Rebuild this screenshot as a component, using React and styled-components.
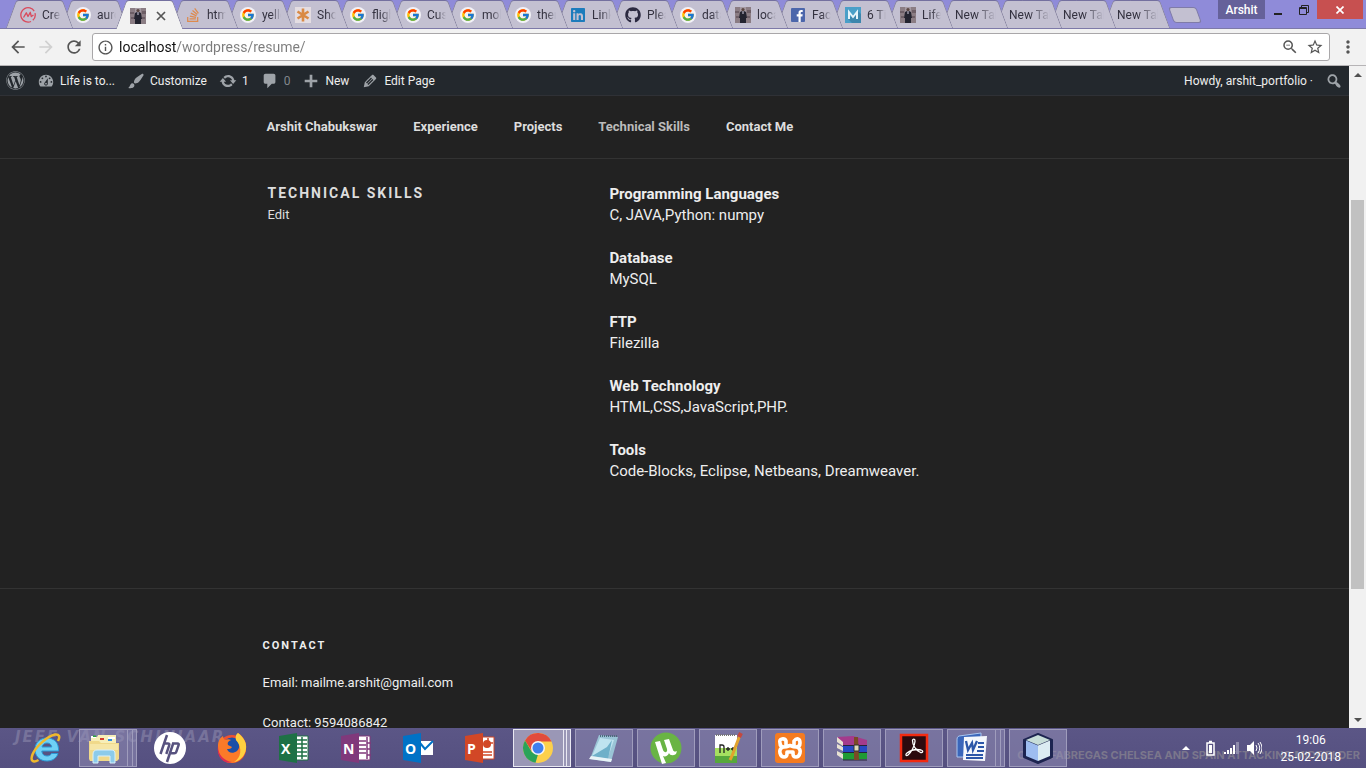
import React from "react";
import styled, { createGlobalStyle, css } from "styled-components";
import { FcGoogle } from "react-icons/fc";
import { FaWordpress, FaGithub, FaLinkedin, FaStackOverflow } from "react-icons/fa";
import {
  MdArrowBack,
  MdArrowForward,
  MdRefresh,
  MdInfoOutline,
  MdStarBorder,
  MdMoreVert,
  MdZoomOut,
} from "react-icons/md";

const ui = `Roboto, "Noto Sans", sans-serif`;
const body = `Roboto, "Liberation Sans", sans-serif`;

const Global = createGlobalStyle`
  * { box-sizing: border-box; }
  body { margin: 0; background: #222; font-family: ${ui}; }
  button { font: inherit; border: 0; padding: 0; background: none; color: inherit; }
  a { color: inherit; text-decoration: none; }
  p, h2, h3 { margin: 0; }
`;

const Screen = styled.div`
  display: flex;
  flex-direction: column;
  height: 100vh;
  overflow: hidden;
`;

/* ---------- Browser tabs ---------- */

const TabStrip = styled.div`
  display: flex;
  flex: none;
  height: 29px;
  padding-left: 6px;
  background: #8f8bd9;
  border-bottom: 1px solid #7d79a8;
`;

const tabFill = (p) => (p.$active ? "#f2f2f2" : "#c3c0d1");

const Tab = styled.button`
  position: relative;
  z-index: ${(p) => (p.$active ? 30 : p.$level)};
  flex: none;
  display: flex;
  align-items: center;
  gap: 6px;
  width: 67px;
  height: ${(p) => (p.$active ? 29 : 28)}px;
  margin-right: ${(p) => (p.$plain ? -13 : -12)}px;
  padding: 2px 12px 0 14px;
  font-size: 12px;
  color: #33313f;
  background: linear-gradient(${tabFill}, ${tabFill}) center / 24px 100% no-repeat;
  &::before,
  &::after {
    content: "";
    position: absolute;
    z-index: -1;
    top: 0;
    bottom: 0;
    width: 29px;
    background: ${tabFill};
    border-top: 1px solid #74709f;
  }
  &::before {
    left: 5px;
    transform: skewX(-20deg);
    border-left: 1px solid #85829e;
    border-top-left-radius: 3px;
  }
  &::after {
    right: 5px;
    transform: skewX(20deg);
    border-right: 1px solid #85829e;
    border-top-right-radius: 3px;
  }
`;

const TabTitle = styled.span`
  flex: 1;
  overflow: hidden;
  white-space: nowrap;
  text-align: left;
  -webkit-mask-image: linear-gradient(90deg, #000 50%, transparent);
  mask-image: linear-gradient(90deg, #000 50%, transparent);
`;

const Favicon = styled.svg`
  flex: none;
  width: 16px;
  height: 16px;
`;

const Disc = styled.span`
  flex: none;
  display: flex;
  align-items: center;
  justify-content: center;
  width: 16px;
  height: 16px;
  border-radius: 8px;
  background: #f3f2f8;
  font-size: 14px;
`;

const IconBox = styled.span`
  flex: none;
  display: flex;
  width: 16px;
  height: 16px;
  font-size: 16px;
  color: ${(p) => p.$color};
`;

const CloseTab = styled.svg`
  width: 10px;
  height: 10px;
  margin-left: 4px;
`;

const NewTab = styled.button`
  flex: none;
  width: 28px;
  height: 16px;
  margin: 7px 0 0 14px;
  background: #c3c0d1;
  border: 1px solid #7f7ba8;
  border-radius: 3px;
  transform: skewX(20deg);
`;

const WindowButtons = styled.div`
  display: flex;
  align-items: flex-start;
  margin-left: auto;
`;

const Profile = styled.button`
  width: 47px;
  height: 19px;
  background: #65619a;
  color: #fff;
  font-size: 12px;
  font-weight: 500;
`;

const WinButton = styled.button`
  display: flex;
  align-items: center;
  justify-content: center;
  width: ${(p) => (p.$close ? 46 : 26)}px;
  height: 19px;
  margin-right: ${(p) => (p.$close ? 3 : 0)}px;
  background: ${(p) => (p.$close ? "#c75050" : "transparent")};
`;

/* ---------- Browser toolbar ---------- */

const Toolbar = styled.div`
  display: flex;
  align-items: center;
  flex: none;
  height: 37px;
  padding: 0 8px;
  background: #f2f2f2;
  border-bottom: 1px solid #b6b4b6;
`;

const ToolButton = styled.button`
  display: flex;
  align-items: center;
  justify-content: center;
  flex: none;
  width: ${(p) => (p.$narrow ? 20 : 28)}px;
  height: 28px;
  font-size: 20px;
  color: ${(p) => (p.$off ? "#d0d0d0" : "#555")};
`;

const NavButtons = styled.div`
  display: flex;
  margin: 0 4px 0 -4px;
`;

const Omnibox = styled.label`
  display: flex;
  align-items: center;
  flex: 1;
  height: 28px;
  margin-right: 8px;
  padding: 0 4px;
  gap: 5px;
  background: #fff;
  border: 1px solid #a9a7a9;
  border-radius: 3px;
  font-size: 17px;
  color: #555;
`;

const Address = styled.input`
  flex: 1;
  min-width: 0;
  height: 24px;
  padding: 0;
  border: 0;
  outline: 0;
  font: 14px ${ui};
  color: transparent;
  background: linear-gradient(90deg, #111 57px, #7c7c7c 57px);
  -webkit-background-clip: text;
  background-clip: text;
`;

const OmniButton = styled.button`
  display: flex;
  width: 20px;
  justify-content: center;
  font-size: 18px;
`;

/* ---------- Viewport ---------- */

const Viewport = styled.div`
  display: flex;
  flex: 1;
  min-height: 0;
`;

const Site = styled.div`
  flex: 1;
  min-width: 0;
  overflow: hidden;
  background: #222;
  color: #eee;
  font-family: ${body};
`;

const Scrollbar = styled.div`
  display: flex;
  flex-direction: column;
  flex: none;
  width: 17px;
  background: #f1f1f1;
`;

const ScrollArrow = styled.button`
  display: flex;
  align-items: center;
  justify-content: center;
  flex: none;
  height: 17px;
`;

const ScrollSpace = styled.div`
  flex: ${(p) => p.$share};
`;

const ScrollThumb = styled.div`
  flex: 389;
  margin: 0 2px;
  background: #c1c1c1;
`;

/* ---------- WordPress admin bar ---------- */

const AdminBar = styled.nav`
  display: flex;
  align-items: center;
  gap: 12px;
  height: 30px;
  padding: 0 6px;
  background: #23282d;
  border-bottom: 1px solid #2f3136;
  font: 12px ${ui};
  color: #eee;
`;

const AdminLink = styled.a`
  display: flex;
  align-items: center;
  gap: 5px;
  white-space: nowrap;
  color: ${(p) => (p.$muted ? "#82878c" : "#eee")};
  margin-left: ${(p) => (p.$end ? "auto" : "0")};
`;

const Glyph = styled.svg`
  flex: none;
  width: 18px;
  height: 18px;
  fill: #9ea3a8;
`;

const Brand = styled.span`
  display: flex;
  font-size: 19px;
  color: #9ea3a8;
`;

/* ---------- Page ---------- */

const Bar = styled.header`
  border-bottom: 1px solid #333;
`;

const Wrap = styled.div`
  max-width: 824px;
  margin: 0 auto;
  padding: 0 ${(p) => p.$inset || 0}px;
`;

const Menu = styled.nav`
  display: flex;
  gap: 36px;
  padding: 21px 0;
  font-size: 13px;
  font-weight: 700;
  line-height: 20px;
`;

const MenuLink = styled.a`
  white-space: nowrap;
  color: ${(p) => (p.$current ? "#bbb" : "#ddd")};
`;

const Columns = styled(Wrap)`
  display: flex;
  padding-top: 25px;
  padding-bottom: 106px;
`;

const Aside = styled.div`
  width: 42%;
  font-size: 13px;
  line-height: 22px;
  color: #ddd;
`;

const Title = styled.h2`
  margin-bottom: 2px;
  font-size: 14px;
  line-height: 18px;
  letter-spacing: 2px;
  text-transform: uppercase;
  color: #ddd;
`;

const Skills = styled.div`
  display: flex;
  flex-direction: column;
  gap: 22px;
  flex: 1;
  font-size: 15px;
  line-height: 21px;
`;

const SkillName = styled.h3`
  font-size: 15px;
  line-height: 21px;
`;

const Footer = styled.footer`
  padding-top: 48px;
  border-top: 1px solid #333;
  font-size: 13px;
  line-height: 20px;
`;

const FooterTitle = styled.h2`
  margin-bottom: 18px;
  font-size: 11px;
  line-height: 18px;
  letter-spacing: 2px;
  text-transform: uppercase;
`;

const FooterLine = styled.p`
  margin-bottom: 20px;
`;

/* ---------- Windows taskbar ---------- */

const Taskbar = styled.div`
  position: relative;
  z-index: 0;
  display: flex;
  align-items: center;
  flex: none;
  height: 40px;
  padding-left: 15px;
  background: linear-gradient(#5b5686, #555080);
`;

const Wallpaper = styled.span`
  position: absolute;
  z-index: -1;
  white-space: nowrap;
  font-weight: 700;
  ${(p) =>
    p.$left
      ? css`
          left: 15px;
          top: 0;
          font-family: "DejaVu Sans", sans-serif;
          font-size: 15px;
          font-style: italic;
          letter-spacing: 2px;
          color: #77739b;
        `
      : css`
          right: 6px;
          bottom: 6px;
          font-family: Inter, sans-serif;
          font-size: 11px;
          color: #7b778c;
        `}
`;

const Task = styled.button`
  position: relative;
  flex: none;
  display: flex;
  align-items: center;
  justify-content: center;
  width: 58px;
  height: 38px;
  margin: 0 2px;
  padding-right: ${(p) => (p.$stack ? 8 : 0)}px;
  border: 1px solid ${(p) => (p.$active ? "#e9e8f2" : p.$open ? "#9f9cbc" : "transparent")};
  background: ${(p) =>
    p.$active ? "#9a97b6" : p.$open ? "rgba(150, 146, 186, 0.5)" : "transparent"};
  ${(p) =>
    p.$stack &&
    css`
      &::after {
        content: "";
        position: absolute;
        top: 0;
        bottom: 0;
        right: 3px;
        width: ${p.$active ? 2 : 4}px;
        border: solid ${p.$active ? "#e9e8f2" : "#9f9cbc"};
        border-width: 0 1px;
      }
    `}
`;

const TaskIcon = styled.svg`
  width: 32px;
  height: 32px;
`;

const Tray = styled.div`
  display: flex;
  align-items: center;
  gap: 6px;
  margin-left: auto;
  padding-right: 25px;
`;

const TrayIcon = styled.svg`
  width: 16px;
  height: 16px;
`;

const TrayArrow = styled.button`
  display: flex;
  margin-right: 6px;
`;

const Clock = styled.div`
  margin-left: 12px;
  padding-top: 2px;
  font-size: 12px;
  line-height: 17px;
  text-align: center;
  color: #fff;
`;

/* ---------- Drawings ---------- */

const Google = () => (
  <Disc>
    <FcGoogle />
  </Disc>
);

const Photo = () => (
  <Favicon viewBox="0 0 16 16">
    <rect width="16" height="16" fill="#a59aa3" />
    <path d="M0 0h5v16H0zM11 0h5v16h-5z" fill="#8b7d84" />
    <path d="M0 4h4v2H0zM12 3h4v3h-4zM1 9h3v2H1zM12 9h3v2h-3z" fill="#6d5e66" />
    <path d="M5 5l2-1h2l2 1 1 6h-1v5H5v-5H4z" fill="#23232f" />
    <circle cx="8" cy="2.6" r="1.6" fill="#5b4742" />
    <path d="M7.4 4h1.2v3H7.4z" fill="#b7b3c4" />
  </Favicon>
);

const Creately = () => (
  <Favicon viewBox="0 0 16 16" fill="none" stroke="#d9495b" strokeWidth="1.3">
    <path d="M14.200 4.200A7.200 7.200 0 1 0 11 14.500M15 6.200A7.200 7.200 0 0 1 12.800 13.300" />
    <path d="M3.500 10.500L6.300 5.800 8 9.500 10.300 5.300 11.300 9.500 13.500 8" strokeLinejoin="round" />
  </Favicon>
);

const Asterisk = () => (
  <Favicon viewBox="0 0 16 16">
    <rect width="16" height="16" fill="#e4dde2" />
    <path d="M8 1.500v13M2.500 4.500l11 7M13.500 4.500l-11 7" stroke="#d98a45" strokeWidth="2.600" />
  </Favicon>
);

const Facebook = () => (
  <Favicon viewBox="0 0 16 16">
    <rect x="1" y="1" width="14" height="14" rx="1" fill="#4c66ab" />
    <path d="M8.500 15V9.500H6.700V7.300h1.800V5.800C8.500 3.900 9.600 3 11.200 3h1.500v2.100h-1c-.8 0-1 .4-1 1v1.200h2l-.3 2.200h-1.700V15z" fill="#fff" />
  </Favicon>
);

const MSquare = () => (
  <Favicon viewBox="0 0 16 16">
    <rect width="16" height="16" fill="#4a9fc8" />
    <path d="M13 4l3 3v9H7l-4-4z" fill="#3d86ad" />
    <path d="M4 12V5l4 5 4-5v7" fill="none" stroke="#e6f3fa" strokeWidth="2" />
  </Favicon>
);

const AdminGlyph = ({ d }) => (
  <Glyph viewBox="0 0 20 20" aria-hidden="true">
    <path d={d} />
  </Glyph>
);

const glyphs = {
  dashboard:
    "M3.76 16h12.48c1.1-1.37 1.76-3.11 1.76-5 0-4.42-3.58-8-8-8s-8 3.58-8 8c0 1.89.66 3.63 1.76 5zM10 4c.55 0 1 .45 1 1s-.45 1-1 1-1-.45-1-1 .45-1 1-1zM6 6c.55 0 1 .45 1 1s-.45 1-1 1-1-.45-1-1 .45-1 1-1zm8 0c.55 0 1 .45 1 1s-.45 1-1 1-1-.45-1-1 .45-1 1-1zm-5.37 5.55L12 7v6c0 1.1-.9 2-2 2s-2-.9-2-2c0-.57.24-1.08.63-1.45zM4 10c.55 0 1 .45 1 1s-.45 1-1 1-1-.45-1-1 .45-1 1-1zm12 0c.55 0 1 .45 1 1s-.45 1-1 1-1-.45-1-1 .45-1 1-1zm-5 3c0-.55-.45-1-1-1s-1 .45-1 1 .45 1 1 1 1-.45 1-1z",
  brush:
    "M18.33 3.57s.27-.8-.31-1.36c-.53-.52-1.22-.24-1.22-.24-.61.3-5.76 3.47-7.67 5.57-.86.96-2.06 3.79-1.09 4.82.92.98 3.96-.17 4.79-1 2.06-2.06 5.21-7.17 5.5-7.79zM1.4 17.65c2.37-1.56 1.46-3.41 3.23-4.64.93-.65 2.22-.62 3.08.29.63.67.8 2.57-.16 3.46-1.57 1.45-4 1.55-6.15.89z",
  update:
    "M10.2 3.28c3.53 0 6.43 2.61 6.92 6h2.08l-3.5 4-3.5-4h2.32c-.45-1.97-2.21-3.45-4.32-3.45-1.45 0-2.73.71-3.54 1.78L4.95 5.66C6.23 4.2 8.11 3.28 10.2 3.28zm-.4 13.44c-3.52 0-6.43-2.61-6.92-6H.8l3.5-4c1.17 1.33 2.33 2.67 3.5 4H5.48c.45 1.97 2.21 3.45 4.32 3.45 1.45 0 2.73-.71 3.54-1.78l1.71 1.95c-1.28 1.46-3.15 2.38-5.25 2.38z",
  comment: "M5 2h9c1.1 0 2 .9 2 2v7c0 1.1-.9 2-2 2h-2l-5 5v-5H5c-1.1 0-2-.9-2-2V4c0-1.1.9-2 2-2z",
  plus: "M17 8.500v3h-5.500V17h-3v-5.500H3v-3h5.500V3h3v5.500z",
  edit:
    "M13.89 3.39l2.71 2.72c.46.46.42 1.24.03 1.64l-8.01 8.02-5.56 1.16 1.16-5.58s7.6-7.63 7.99-8.03c.39-.39 1.22-.39 1.68.07zm-2.73 2.79l-5.59 5.61 1.11 1.11 5.54-5.65zm-2.97 8.23l5.58-5.6-1.07-1.08-5.59 5.6z",
  search:
    "M12.14 4.18c1.87 1.87 2.11 4.75.72 6.89.12.1.22.21.36.31.2.16.47.36.81.59.34.24.56.39.66.47.42.31.73.57.94.78.32.32.6.65.84 1 .25.35.44.69.59 1.04.14.35.21.68.18 1-.02.32-.14.59-.36.81s-.49.34-.81.36c-.31.02-.65-.04-.99-.19-.35-.14-.7-.34-1.04-.59-.35-.24-.68-.52-1-.84-.21-.21-.47-.52-.77-.93-.1-.13-.25-.35-.47-.66-.22-.32-.4-.57-.56-.78-.16-.2-.29-.35-.44-.5-2.07 1.09-4.69.76-6.44-.98-2.14-2.15-2.14-5.64 0-7.78 2.15-2.15 5.63-2.15 7.78 0zm-1.41 6.36c1.36-1.37 1.36-3.58 0-4.95-1.37-1.37-3.59-1.37-4.95 0-1.37 1.37-1.37 3.58 0 4.95 1.36 1.37 3.58 1.37 4.95 0z",
};

const OfficeIcon = ({ color, children }) => (
  <TaskIcon viewBox="0 0 32 32">
    {children}
    <path d="M1 4l18-3v30L1 28z" fill={color} />
  </TaskIcon>
);

const taskIcons = {
  ie: (
    <TaskIcon viewBox="0 0 32 32">
      <path d="M17 6C9.500 6 5 11 5 17.500S9.500 29 17 29c5.500 0 9.500-2.800 11-7.500h-6.500c-1 1.800-2.500 2.500-4.500 2.500-3 0-5-1.800-5.200-5H28.500C29 11 24.500 6 17 6zm-5 9c.6-2.600 2.500-4 5-4s4.400 1.400 4.800 4z" fill="#6fd0f5" stroke="#2b9ad6" />
      <path d="M28 9c2.500-4.500 1-7-3-6.500C18 4 6 14 2.500 22.500 0 29 3 31 8.500 28" fill="none" stroke="#f0b92c" strokeWidth="2.500" />
    </TaskIcon>
  ),
  explorer: (
    <TaskIcon viewBox="0 0 32 32">
      <path d="M3 5h6l1-2h18v8H3z" fill="#f7eeb8" />
      <path d="M3 4h5v2H3zM20 5h7v2h-7z" fill="#fff" />
      <path d="M5 3.500h3V5H5z" fill="#2aa53a" />
      <path d="M12 6h4v2h-4z" fill="#d43c2e" />
      <path d="M20 7h4v2h-4z" fill="#2f8fe0" />
      <path d="M1 9h10l2 2h18v16l-2 2H2l-1-2z" fill="#f0d98a" />
      <path d="M2 12h28v6H2z" fill="#f6e6a6" />
      <path d="M5 31V22c0-3 2-4 4-4h14c3 0 4 1 4 4v9h-5v-7H10v7z" fill="#8ccbea" stroke="#d8f0fb" />
    </TaskIcon>
  ),
  hp: (
    <TaskIcon viewBox="0 0 32 32">
      <circle cx="16" cy="16" r="16" fill="#fff" />
      <path d="M13 3L6.500 22M10.500 11.500h3.500q1.800 0 1.200 1.800L12.300 22M19.500 10.500L13 30M19 11.500h4.500q1.700 0 1.100 1.700l-2.300 6.600q-.5 1.400-2 1.400h-4" fill="none" stroke="#57527f" strokeWidth="2.500" />
    </TaskIcon>
  ),
  firefox: (
    <TaskIcon viewBox="0 0 32 32">
      <circle cx="16" cy="17" r="14" fill="#f0512f" />
      <circle cx="16" cy="15" r="9.500" fill="#1c4fa8" />
      <path d="M2 14C2 9 4 6 7 4c0 2 1 3 2 4 2-1 4-1 6 0-3 1-4 3-3 5l4 2c-1 2-3 2-5 2 1 4 6 5 10 2 4-4 2-9-1-11 0-3 1-5 2-7 6 4 9 10 8 16-1 8-8 14-15 14C8 31 1 25 2 14z" fill="#fb7a28" />
      <path d="M20 8c-1-3 0-6 2-7 5 4 9 9 8 16-1 7-6 12-12 13 7-4 9-14 2-22z" fill="#fed140" />
      <path d="M2 14c0 9 6 15 14 16-8 3-16-5-14-16z" fill="#d92b55" />
    </TaskIcon>
  ),
  excel: (
    <OfficeIcon color="#1e7145">
      <path d="M16 4h14v24H16z" fill="#fff" stroke="#1e7145" />
      <path d="M19 8h10M19 12h10M19 16h10M19 20h10M19 24h10M24 5v22" stroke="#1e7145" strokeWidth="1.500" />
    </OfficeIcon>
  ),
  onenote: (
    <OfficeIcon color="#80397b">
      <path d="M17 4h13v24H17z" fill="#fff" stroke="#80397b" />
      <path d="M19 9h7M19 13h7M19 17h7M19 21h7M27 5v22M27 11h4M27 17h4M27 23h4" stroke="#80397b" strokeWidth="1.500" />
    </OfficeIcon>
  ),
  outlook: (
    <OfficeIcon color="#0072c6">
      <path d="M16 9h15v14H16z" fill="#fff" />
      <path d="M18 11l5 6 8-8" fill="none" stroke="#0072c6" strokeWidth="2" />
    </OfficeIcon>
  ),
  powerpoint: (
    <OfficeIcon color="#d24726">
      <path d="M16 5h14v22H16z" fill="#fff" stroke="#d24726" />
      <circle cx="23" cy="12" r="4" fill="#d24726" />
      <path d="M24 6v5h5M19 20h9M19 23h9" fill="none" stroke="#d24726" strokeWidth="1.500" />
    </OfficeIcon>
  ),
  chrome: (
    <TaskIcon viewBox="0 0 32 32">
      <circle cx="16" cy="16" r="15" fill="#fcd04b" />
      <path d="M3 8.500A15 15 0 0 1 29.500 9.500H16l-6 10z" fill="#e14b3c" />
      <path d="M3 8.500l6.800 11.500L16 22.500 13.500 30.800A15 15 0 0 1 3 8.500z" fill="#2aa35a" />
      <circle cx="16" cy="16" r="7" fill="#f6f6f6" />
      <circle cx="16" cy="16" r="5.500" fill="#3f7fee" />
    </TaskIcon>
  ),
  notepad: (
    <TaskIcon viewBox="0 0 32 32">
      <path d="M11 3l19 2-7 25-21-3z" fill="#9ac4d6" />
      <path d="M12 6l14 2-6 17L4 24z" fill="#bfe3ef" />
      <path d="M4 24l15-9 5-7-4 19z" fill="#6fb0c9" />
      <path d="M1 27l22 3 1-3-21-3z" fill="#e8f3f7" />
      <path d="M12 4h17" stroke="#4d6c7c" strokeWidth="2" strokeDasharray="1 1" />
    </TaskIcon>
  ),
  utorrent: (
    <TaskIcon viewBox="0 0 32 32">
      <circle cx="16" cy="16" r="15.500" fill="#69b444" />
      <path d="M5 10l5-1 3 9c1 3 5 3 4-1l-3-9 5-1 4 11c.5 1.500 2 2 4 1l-1 3c-3 2-6 1.500-7-1-1 3-4 4-6 3l3 7-4 1z" fill="#fff" />
    </TaskIcon>
  ),
  notepadpp: (
    <TaskIcon viewBox="0 0 32 32">
      <path d="M3 3h22v28H3z" fill="#fff" />
      <path d="M3 16h22v15H3z" fill="#a6e060" />
      <path d="M3 24h22v7H3z" fill="#57a83c" />
      <path d="M4 3h20" stroke="#777" strokeWidth="2" strokeDasharray="1 1" />
      <path d="M8 21v-8h2q2 0 2 2v6M14 17h4M16 15v4M19 17h4M21 15v4" fill="none" stroke="#222" strokeWidth="1.300" />
      <path d="M28 3l-8 21-2 4" stroke="#e2a32d" strokeWidth="3" fill="none" />
      <path d="M29 1l-2 4" stroke="#c3483f" strokeWidth="4" />
    </TaskIcon>
  ),
  xampp: (
    <TaskIcon viewBox="0 0 32 32">
      <rect x="1" y="1" width="30" height="30" rx="3" fill="#f47b20" />
      <g fill="none" stroke="#fff" strokeWidth="3.600" strokeLinejoin="round">
        <path d="M12 14V9q-1-2.500-4-2t-2 4q0 4 4 4 2 0 6-1.500 4 1.500 6 1.500 4 0 4-4 0-3.500-2-4t-4 2v5" />
        <path d="M9 15q-4 2-3 6t4 4q3 0 3-3v-2h6v2q0 3 3 3 3 0 4-4t-3-6" />
      </g>
    </TaskIcon>
  ),
  winrar: (
    <TaskIcon viewBox="0 0 32 32">
      <path d="M1 5l16-1 14 4v5l-24 1z" fill="#a43b8c" />
      <path d="M1 5l6 5v4l-6-4z" fill="#e8e2d2" />
      <path d="M5 14h26v6H7z" fill="#2748c4" />
      <path d="M1 12l6 3v4l-6-3z" fill="#e8e2d2" />
      <path d="M5 21h26v6l-24 1z" fill="#1f9b34" />
      <path d="M1 19l6 3v5l-6-4z" fill="#e8e2d2" />
      <path d="M7 13.500h24M7 20.500h24M7 28h24" stroke="#262338" />
      <path d="M18 5h4l1 23h-5z" fill="#7b4a25" />
      <path d="M18 13h5v6h-5z" fill="#ded9b8" stroke="#333" />
    </TaskIcon>
  ),
  acrobat: (
    <TaskIcon viewBox="0 0 32 32">
      <rect x="3" y="3" width="26" height="26" fill="#2b0a0e" stroke="#f22a10" strokeWidth="2.500" />
      <path d="M14.500 8.500c0-2 3-2 2.500 1-.5 5-4 11-7 13.500-2 1.500-3-.5-1-2 4-3 10-4 14-3 3 1 1.500 3-.5 2.500-5-2-8-8-8-12z" fill="none" stroke="#fff" strokeWidth="1.300" />
    </TaskIcon>
  ),
  word: (
    <TaskIcon viewBox="0 0 32 32">
      <path d="M3 4l22-3v24H1V9c0-3 0-4 2-5z" fill="#3a66ba" stroke="#a9c5ef" />
      <path d="M8 5l23-1-2 25-22-1z" fill="#f4f7fc" />
      <path d="M22 11h6M22 15h6M21 19h7M10 23h17M10 26h17" stroke="#2b56a8" strokeWidth="2" />
      <path d="M10 9l2 9 4-7 1 7 4-9" fill="none" stroke="#2b56a8" strokeWidth="2.300" />
    </TaskIcon>
  ),
  netbeans: (
    <TaskIcon viewBox="0 0 32 32">
      <path d="M16 2l14 6v17l-14 6-14-6V8z" fill="#1d2450" stroke="#1d2450" strokeWidth="2" strokeLinejoin="round" />
      <path d="M16 3l12 5-12 5L4 8z" fill="#c8ded9" />
      <path d="M4 8.500l12 5V29L4 24z" fill="#9ebdf0" />
      <path d="M28 8.500l-12 5V29l12-5z" fill="#dcecf2" />
    </TaskIcon>
  ),
};

const Letter = styled.span`
  position: absolute;
  left: 15px;
  top: 9px;
  font: 700 14px/20px "Open Sans", sans-serif;
  color: #fff;
`;

/* ---------- Data ---------- */

const tabs = [
  { title: "Create", icon: <Creately /> },
  { title: "aurora", icon: <Google /> },
  { active: true, icon: <Photo /> },
  { title: "html", icon: <IconBox $color="#dd8a4e"><FaStackOverflow /></IconBox> },
  { title: "yellow", icon: <Google /> },
  { title: "Show", icon: <Asterisk /> },
  { title: "flight", icon: <Google /> },
  { title: "Custom", icon: <Google /> },
  { title: "mobile", icon: <Google /> },
  { title: "theme", icon: <Google /> },
  { title: "LinkedIn", icon: <IconBox $color="#1d7cbc"><FaLinkedin /></IconBox> },
  { title: "Please", icon: <IconBox $color="#2b2940"><FaGithub /></IconBox> },
  { title: "data", icon: <Google /> },
  { title: "localhost", icon: <Photo /> },
  { title: "Facebook", icon: <Facebook /> },
  { title: "6 Tips", icon: <MSquare /> },
  { title: "Life is", icon: <Photo /> },
  { title: "New Tab" },
  { title: "New Tab" },
  { title: "New Tab" },
  { title: "New Tab" },
];

const menu = ["Arshit Chabukswar", "Experience", "Projects", "Technical Skills", "Contact Me"];

const skills = [
  ["Programming Languages", "C, JAVA,Python: numpy"],
  ["Database", "MySQL"],
  ["FTP", "Filezilla"],
  ["Web Technology", "HTML,CSS,JavaScript,PHP."],
  ["Tools", "Code-Blocks, Eclipse, Netbeans, Dreamweaver."],
];

const tasks = [
  { id: "ie" },
  { id: "explorer", open: true, stack: true },
  { id: "hp" },
  { id: "firefox" },
  { id: "excel", letter: "X" },
  { id: "onenote", letter: "N" },
  { id: "outlook", letter: "O" },
  { id: "powerpoint", letter: "P" },
  { id: "chrome", open: true, active: true, stack: true },
  { id: "notepad", open: true },
  { id: "utorrent", open: true },
  { id: "notepadpp", open: true },
  { id: "xampp", open: true },
  { id: "winrar", open: true },
  { id: "acrobat", open: true },
  { id: "word", open: true, stack: true },
  { id: "netbeans", open: true },
];

const Triangle = ({ down, color = "#505050" }) => (
  <svg width="8" height="4" viewBox="0 0 8 4" aria-hidden="true">
    <path d={down ? "M0 0h8L4 4z" : "M0 4h8L4 0z"} fill={color} />
  </svg>
);

export default function App() {
  return (
    <Screen>
      <Global />
      <TabStrip>
        {tabs.map((t, i) => (
          <Tab key={i} $active={t.active} $plain={!t.icon} $level={25 - i}>
            {t.icon}
            {t.active ? (
              <CloseTab viewBox="0 0 10 10" stroke="#555" strokeWidth="1.700">
                <path d="M1 1l8 8M9 1L1 9" />
              </CloseTab>
            ) : (
              <TabTitle>{t.title}</TabTitle>
            )}
          </Tab>
        ))}
        <NewTab aria-label="New tab" />
        <WindowButtons>
          <Profile>Arshit</Profile>
          <WinButton aria-label="Minimize">
            <svg width="8" height="10" viewBox="0 0 8 10">
              <path d="M0 8h8v2H0z" fill="#222" />
            </svg>
          </WinButton>
          <WinButton aria-label="Restore">
            <svg width="10" height="10" viewBox="0 0 10 10" fill="none" stroke="#222">
              <path d="M2.500 2V.5h7v7H8M.5 2.500h7v7h-7zM.5 3.500h7" />
            </svg>
          </WinButton>
          <WinButton $close aria-label="Close">
            <svg width="8" height="8" viewBox="0 0 8 8" stroke="#fff" strokeWidth="1.700">
              <path d="M.5.5l7 7M7.500.5l-7 7" />
            </svg>
          </WinButton>
        </WindowButtons>
      </TabStrip>

      <Toolbar>
        <NavButtons>
          <ToolButton aria-label="Back"><MdArrowBack /></ToolButton>
          <ToolButton $off aria-label="Forward"><MdArrowForward /></ToolButton>
          <ToolButton aria-label="Reload"><MdRefresh /></ToolButton>
        </NavButtons>
        <Omnibox>
          <MdInfoOutline />
          <Address aria-label="Address" defaultValue="localhost/wordpress/resume/" />
          <OmniButton aria-label="Zoom"><MdZoomOut /></OmniButton>
          <OmniButton aria-label="Bookmark"><MdStarBorder /></OmniButton>
        </Omnibox>
        <ToolButton $narrow aria-label="Menu"><MdMoreVert /></ToolButton>
      </Toolbar>

      <Viewport>
        <Site>
          <AdminBar>
            <AdminLink href="#wp" aria-label="WordPress"><Brand><FaWordpress /></Brand></AdminLink>
            <AdminLink href="#site"><AdminGlyph d={glyphs.dashboard} />Life is to...</AdminLink>
            <AdminLink href="#customize"><AdminGlyph d={glyphs.brush} />Customize</AdminLink>
            <AdminLink href="#updates"><AdminGlyph d={glyphs.update} />1</AdminLink>
            <AdminLink href="#comments" $muted><AdminGlyph d={glyphs.comment} />0</AdminLink>
            <AdminLink href="#new"><AdminGlyph d={glyphs.plus} />New</AdminLink>
            <AdminLink href="#edit"><AdminGlyph d={glyphs.edit} />Edit Page</AdminLink>
            <AdminLink href="#profile" $end>Howdy, arshit_portfolio ·</AdminLink>
            <AdminLink href="#search" aria-label="Search"><AdminGlyph d={glyphs.search} /></AdminLink>
          </AdminBar>

          <Bar>
            <Wrap $inset={4}>
              <Menu>
                {menu.map((m) => (
                  <MenuLink key={m} href="#menu" $current={m === "Technical Skills"}>{m}</MenuLink>
                ))}
              </Menu>
            </Wrap>
          </Bar>

          <Columns $inset={5}>
            <Aside>
              <Title>Technical Skills</Title>
              <a href="#edit-section">Edit</a>
            </Aside>
            <Skills>
              {skills.map(([name, text]) => (
                <div key={name}>
                  <SkillName>{name}</SkillName>
                  <p>{text}</p>
                </div>
              ))}
            </Skills>
          </Columns>

          <Footer>
            <Wrap>
              <FooterTitle>Contact</FooterTitle>
              <FooterLine>Email: mailme.arshit@gmail.com</FooterLine>
              <FooterLine>Contact: 9594086842</FooterLine>
            </Wrap>
          </Footer>
        </Site>
        <Scrollbar>
          <ScrollArrow aria-label="Scroll up"><Triangle /></ScrollArrow>
          <ScrollSpace $share={117} />
          <ScrollThumb />
          <ScrollSpace $share={122} />
          <ScrollArrow aria-label="Scroll down"><Triangle down /></ScrollArrow>
        </Scrollbar>
      </Viewport>

      <Taskbar>
        <Wallpaper $left>JEFF VAN SCHINJAAR</Wallpaper>
        <Wallpaper>CECS FABREGAS CHELSEA AND SPAIN ATTACKING MIDFIELDER</Wallpaper>
        {tasks.map((t) => (
          <Task key={t.id} aria-label={t.id} $open={t.open} $active={t.active} $stack={t.stack}>
            {taskIcons[t.id]}
            {t.letter && <Letter>{t.letter}</Letter>}
          </Task>
        ))}
        <Tray>
          <TrayArrow aria-label="Show hidden icons"><Triangle color="#fff" /></TrayArrow>
          <TrayIcon viewBox="0 0 16 16" fill="none" stroke="#fff" strokeWidth="1.500">
            <path d="M5 3h7v12H5zM7 1.500h3" />
            <path d="M7 5h3v8H7z" fill="#fff" stroke="none" />
          </TrayIcon>
          <TrayIcon viewBox="0 0 16 16" fill="#fff">
            <path d="M0 12h2v2H0zM3 10h2v4H3zM6 8h2v6H6zM9 5h2v9H9z" />
            <path d="M12 2h3v12h-3z" fill="#8e8bab" />
          </TrayIcon>
          <TrayIcon viewBox="0 0 16 16" fill="#fff">
            <path d="M1 5h3l4-4v14l-4-4H1z" />
            <path d="M10 5q2 3 0 6M12 3q3.500 5 0 10M14 2q4 6 0 12" fill="none" stroke="#fff" />
          </TrayIcon>
          <Clock>
            <div>19:06</div>
            <div>25-02-2018</div>
          </Clock>
        </Tray>
      </Taskbar>
    </Screen>
  );
}
